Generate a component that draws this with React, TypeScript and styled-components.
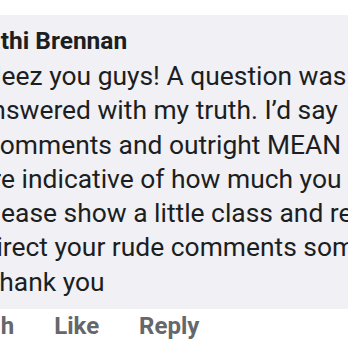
import React from "react";
import styled, { createGlobalStyle } from "styled-components";

const Global = createGlobalStyle`
  html, body {
    margin: 0;
    padding: 0;
    background: #ffffff;
    overflow: hidden;
  }
  body {
    font-family: Roboto, "Liberation Sans", sans-serif;
  }
`;

const Page = styled.div`
  width: 348px;
  height: 348px;
  overflow: hidden;
  padding-top: 15px;
  box-sizing: border-box;
`;

const Comment = styled.div`
  margin-left: -20px;
  width: 640px;
  display: flex;
  flex-direction: column;
  align-items: flex-start;
`;

const Bubble = styled.div`
  align-self: stretch;
  background: #f0f0f5;
  border-radius: 18px;
  padding: 9px 0 10px 0;
`;

const Name = styled.div<{ $shift: number }>`
  font-size: 24.5px;
  font-weight: 700;
  line-height: 34px;
  color: #1c1e21;
  white-space: nowrap;
  margin-left: ${(p) => p.$shift}px;
  margin-bottom: 1px;
`;

const Body = styled.div`
  font-size: 26.4px;
  font-weight: 400;
  line-height: 34.3px;
  color: #1c1e21;
`;

const Line = styled.div<{ $shift: number }>`
  white-space: nowrap;
  margin-left: ${(p) => p.$shift}px;
`;

const Actions = styled.div`
  display: flex;
  gap: 40px;
  margin-top: 2px;
  margin-left: 7px;
  font-size: 24px;
  font-weight: 700;
  line-height: 30px;
  color: #65676b;
`;

const Action = styled.span``;

const lines: { text: string; shift: number }[] = [
  { text: "Jeez you guys! A question was", shift: 7 },
  { text: "answered with my truth. I\u2019d say", shift: -3 },
  { text: "comments and outright MEAN comments", shift: 6 },
  { text: "are indicative of how much you care.", shift: -2 },
  { text: "Please show a little class and respect", shift: -2 },
  { text: "direct your rude comments somewhere else.", shift: 1.5 },
  { text: "Thank you", shift: 3.5 },
];

export default function App() {
  return (
    <>
      <Global />
      <Page>
        <Comment>
          <Bubble>
            <Name $shift={-8}>Kathi Brennan</Name>
            <Body>
              {lines.map((l, i) => (
                <Line key={i} $shift={l.shift}>
                  {l.text}
                </Line>
              ))}
            </Body>
          </Bubble>
          <Actions>
            <Action>1h</Action>
            <Action>Like</Action>
            <Action>Reply</Action>
          </Actions>
        </Comment>
      </Page>
    </>
  );
}
